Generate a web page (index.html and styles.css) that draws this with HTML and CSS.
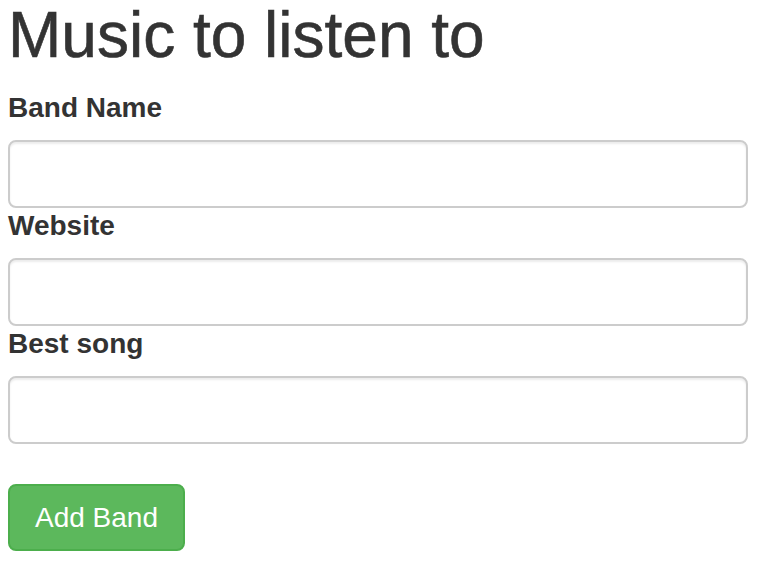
FILE: index.html
```html
<!DOCTYPE html>
<html lang="en">
<head>
  <meta charset="UTF-8">
  <meta name="viewport" content="width=device-width, initial-scale=1.0">
  <title>Music to listen to</title>
  <link rel="stylesheet" href="styles.css">
</head>
<body>
  <h1>Music to listen to</h1>

  <form class="band-form">
    <div class="form-group">
      <label for="band-name">Band Name</label>
      <input type="text" id="band-name" class="form-control">
    </div>
    <div class="form-group">
      <label for="website">Website</label>
      <input type="text" id="website" class="form-control">
    </div>
    <div class="form-group">
      <label for="best-song">Best song</label>
      <input type="text" id="best-song" class="form-control">
    </div>
    <button type="button" class="btn btn-success">Add Band</button>
  </form>
</body>
</html>
```

FILE: styles.css
```css
:root {
  --text-color: #333333;
  --input-border: #cccccc;
  --success-color: #5cb85c;
  --success-border: #4cae4c;
}

body {
  margin: 0 12px 0 8px;
  font-family: 'Liberation Sans', Arial, sans-serif;
  color: var(--text-color);
  background-color: #FFFFFF;
}

h1 {
  margin: 0 0 20px 0;
  font-size: 64px;
  font-weight: 400;
  line-height: 1.1;
  -webkit-text-stroke: 0.6px var(--text-color);
}

.band-form {
  display: flex;
  flex-direction: column;
  align-items: flex-start;
}

.form-group {
  width: 100%;
}

.form-group label {
  display: block;
  margin-bottom: 14px;
  font-size: 28px;
  font-weight: bold;
  line-height: 36px;
}

.form-control {
  display: block;
  box-sizing: border-box;
  width: 100%;
  height: 68px;
  margin: 0;
  padding: 12px 24px;
  font-size: 28px;
  font-family: inherit;
  color: #555;
  background-color: #FFFFFF;
  border: 2px solid var(--input-border);
  border-radius: 8px;
  box-shadow: inset 0 2px 2px rgba(0, 0, 0, 0.075);
  outline: none;
}

.btn {
  margin-top: 40px;
  padding: 12px 25px;
  font-family: inherit;
  font-size: 28px;
  line-height: 39px;
  border-radius: 8px;
  cursor: pointer;
}

.btn-success {
  color: #FFFFFF;
  background-color: var(--success-color);
  border: 2px solid var(--success-border);
}
```
